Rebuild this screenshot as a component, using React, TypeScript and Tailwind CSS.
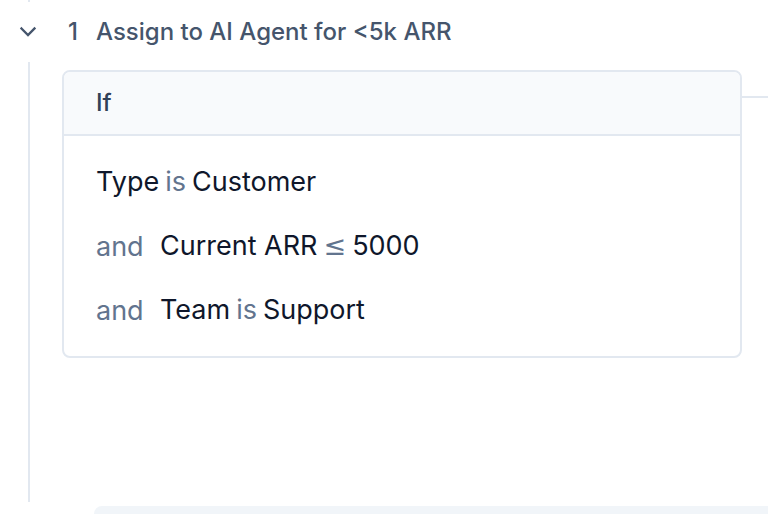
import React from "react";

type Condition = { join?: string; field: string; operator: string; value: string };

const conditions: Condition[] = [
  { field: "Type", operator: "is", value: "Customer" },
  { join: "and", field: "Current ARR", operator: "≤", value: "5000" },
  { join: "and", field: "Team", operator: "is", value: "Support" },
];

function Rule({ condition }: { condition: Condition }) {
  const isSymbol = condition.operator === "≤";
  return (
    <li className="flex h-16 items-center text-[27px] leading-8 text-slate-900">
      {condition.join && <span className="w-16 shrink-0 pt-0.5 text-slate-500">{condition.join}</span>}
      <span className="flex gap-1.5 whitespace-nowrap">
        <span>{condition.field}</span>
        <span className={isSymbol ? "font-['DejaVu_Sans',sans-serif] text-slate-500" : "text-slate-500"}>
          {condition.operator}
        </span>
        <span>{condition.value}</span>
      </span>
    </li>
  );
}

export default function App() {
  return (
    <main className="flex h-screen flex-col overflow-hidden bg-white font-['Inter',sans-serif]">
      <header className="flex h-[62px] shrink-0 flex-col">
        <div className="ml-7 h-[2px] w-[2px] bg-slate-200" />
        <button type="button" className="flex h-[60px] items-center pl-4 text-left text-2xl font-medium text-slate-600">
          <svg className="size-6" viewBox="0 0 24 24" fill="none" stroke="currentColor" strokeWidth="2.3" strokeLinecap="square" strokeLinejoin="miter" aria-hidden="true">
            <path d="m5.5 8.5 6.5 6.5 6.5-6.5" />
          </svg>
          <span className="w-14 pl-7">1</span>
          <span className="whitespace-nowrap">Assign to AI Agent for &lt;5k ARR</span>
        </button>
      </header>
      <div className="flex grow pl-7">
        <div className="mb-3 w-[2px] shrink-0 bg-slate-200" />
        <div className="flex min-w-0 grow flex-col justify-between pt-2">
          <div className="flex pl-8">
            <section className="grow rounded-lg border-2 border-slate-200">
              <h2 className="flex h-16 items-center rounded-t-md border-b-2 border-slate-200 bg-slate-50 pl-8 text-2xl font-medium text-slate-700">If</h2>
              <ul className="py-3.5 pl-8">
                {conditions.map((c) => <Rule key={c.field} condition={c} />)}
              </ul>
            </section>
            <div className="mt-[26px] h-[2px] w-[26px] shrink-0 bg-slate-200" />
          </div>
          <div className="ml-16 h-2 rounded-tl-lg bg-slate-100" />
        </div>
      </div>
    </main>
  );
}
